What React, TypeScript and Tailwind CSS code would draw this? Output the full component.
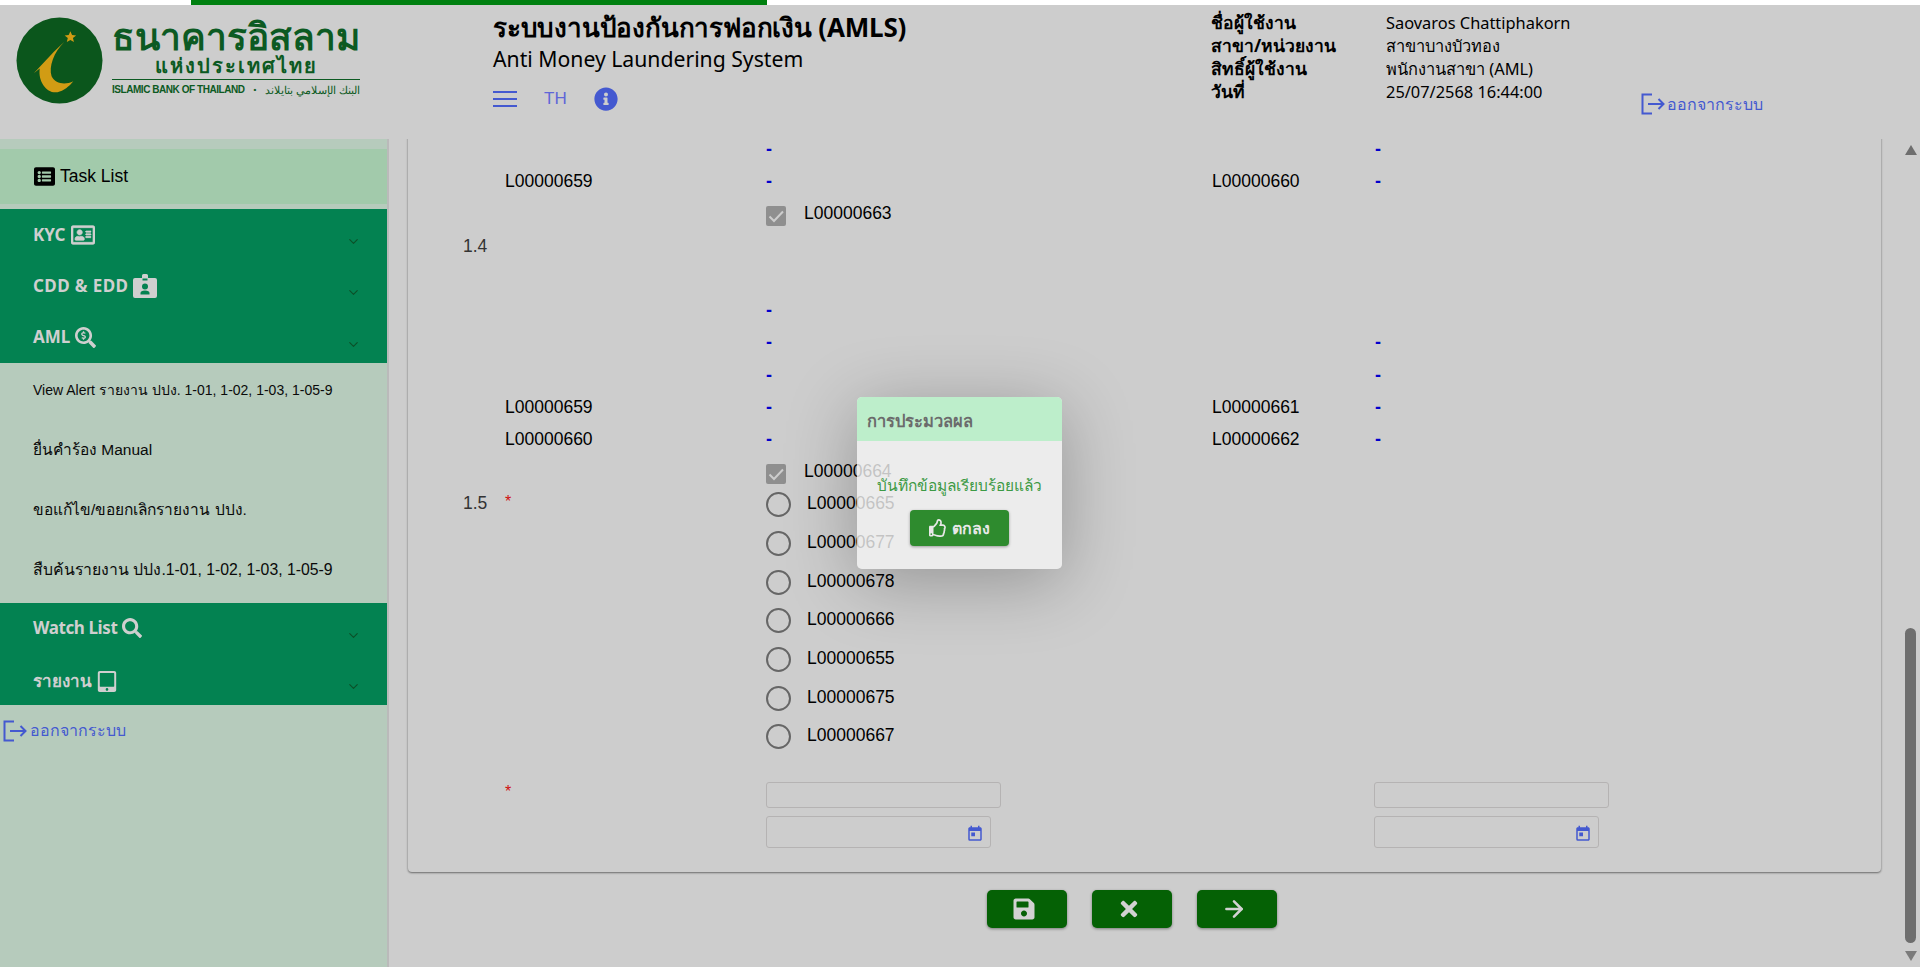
import React from "react";
import {
  FaListAlt, FaRegAddressCard, FaSearchDollar, FaSearch, FaTabletAlt,
  FaSave, FaTimes, FaInfoCircle, FaRegThumbsUp,
} from "react-icons/fa";
import { MdToday } from "react-icons/md";
import { ChevronDown, ArrowRight } from "lucide-react";

const LogoutIcon = ({ className }: { className?: string }) => (
  <svg viewBox="0 0 24 22" className={className} fill="none" stroke="currentColor" strokeWidth="2">
    <path d="M11 1.5H1.5v19H11" />
    <path d="M7 11h15.5M17.5 6l5 5-5 5" />
  </svg>
);

const BadgeIcon = () => (
  <svg viewBox="0 0 24 24" className="w-[24px] h-[24px]" fill="currentColor">
    <path fillRule="evenodd" d="M9 1.5A1.5 1.5 0 0 1 10.5 0h3A1.5 1.5 0 0 1 15 1.5V4h7a2 2 0 0 1 2 2v16a2 2 0 0 1-2 2H2a2 2 0 0 1-2-2V6a2 2 0 0 1 2-2h7zM9.5 4.5v2h5v-2zM12 9.5a3 3 0 1 0 0 6 3 3 0 0 0 0-6zM7.5 19v1.5h9V19c0-1.5-1.5-2.5-4.5-2.5S7.5 17.5 7.5 19z" />
  </svg>
);

const Logo = () => (
  <div className="flex items-start pl-[16px] pt-[12px] w-[493px] shrink-0">
    <svg viewBox="0 0 88 88" className="w-[87px] h-[87px] shrink-0">
      <circle cx="44" cy="44" r="43.5" fill="#0b561c" />
      <path d="M49 25C40 33 28 46 18 57L24 52C22 66 32 78 42 76 48 75 54 70 58 65 50 69 40 68 36 60 33 50 38 36 49 25Z" fill="#d19c14" />
      <path d="M55 14.5l1.7 3.8 4.1.3-3.2 2.7 1 4.1-3.6-2.2-3.6 2.2 1-4.1-3.2-2.7 4.1-.3z" fill="#d19c14" />
    </svg>
    <div className="ml-[9px] -mt-[2px] w-[248px] text-[#0c5a22] font-['Noto_Sans','DejaVu_Sans',sans-serif]">
      <div className="text-[37px] leading-[41px] font-semibold text-center h-[41px] whitespace-nowrap">ธนาคารอิสลาม</div>
      <div className="text-[20px] leading-[20px] font-bold text-center tracking-[2px] border-b border-[#0c5a22] pb-[3px] whitespace-nowrap">แห่งประเทศไทย</div>
      <div className="flex justify-between items-center text-[10px] leading-[20px] font-bold font-['Liberation_Sans',sans-serif] whitespace-nowrap tracking-[-0.45px]">
        <span>ISLAMIC BANK OF THAILAND</span>
        <span className="text-[8px]">•</span>
        <span className="font-normal text-[11px]">البنك الإسلامي بتايلاند</span>
      </div>
    </div>
  </div>
);

const Header = () => (
  <div className="h-[134px] flex bg-[#cdcdcd] text-black font-['Noto_Sans','DejaVu_Sans',sans-serif]">
    <Logo />
    <div className="w-[718px] shrink-0 pt-[4px]">
      <div className="text-[26px] tracking-[-0.2px] leading-[36px] font-bold whitespace-nowrap">ระบบงานป้องกันการฟอกเงิน (AMLS)</div>
      <div className="text-[21.2px] leading-[28px] whitespace-nowrap">Anti Money Laundering System</div>
      <div className="flex items-center h-[24px] mt-[14px] text-[#4459d0]">
        <svg viewBox="0 0 24 16" className="w-[24px] h-[16px]" fill="currentColor">
          <rect y="0" width="24" height="2" /><rect y="7" width="24" height="2" /><rect y="14" width="24" height="2" />
        </svg>
        <span className="ml-[27px] text-[17px] font-['Liberation_Sans',sans-serif] text-[#5f66d8] -mt-[1px]">TH</span>
        <FaInfoCircle className="ml-[27px] w-[24px] h-[24px]" />
      </div>
    </div>
    <div className="w-[429px] shrink-0 pt-[6px] grid grid-cols-[175px_1fr] auto-rows-[23px] text-[16.4px] leading-[23px] content-start whitespace-nowrap">
      <span className="font-bold text-[17.5px]">ชื่อผู้ใช้งาน</span><span>Saovaros Chattiphakorn</span>
      <span className="font-bold text-[17.5px]">สาขา/หน่วยงาน</span><span>สาขาบางบัวทอง</span>
      <span className="font-bold text-[17.5px]">สิทธิ์ผู้ใช้งาน</span><span>พนักงานสาขา (AML)</span>
      <span className="font-bold text-[17.5px]">วันที่</span><span>25/07/2568 16:44:00</span>
    </div>
    <div className="flex items-start pt-[88px] text-[#4459d0]">
      <LogoutIcon className="w-[26px] h-[22px]" />
      <span className="text-[16px] leading-[22px] ml-[1px] whitespace-nowrap">ออกจากระบบ</span>
    </div>
  </div>
);

const GreenItem = ({ label, icon, h, chev, track = "" }: { label: string; icon: React.ReactNode; h: string; chev: string; track?: string }) => (
  <div className={`flex items-start pl-[33px] pr-[26px] ${h}`}>
    <span className="flex items-center gap-[5px] text-[#cfcfcf] text-[17px] font-bold leading-[26px] whitespace-nowrap">
      <span className={track}>{label}</span>
      {icon}
    </span>
    <ChevronDown className={`ml-auto w-[15px] h-[15px] text-[#0c4f28] ${chev}`} strokeWidth={1.8} />
  </div>
);

const SubItem = ({ children, cls }: { children: React.ReactNode; cls: string }) => (
  <div className={`h-[60px] flex items-center pl-[33px] text-[#0a0a0a] whitespace-nowrap font-['Liberation_Sans','Noto_Sans',sans-serif] ${cls}`}>
    {children}
  </div>
);

const Sidebar = () => (
  <div className="w-[389px] shrink-0 bg-[#b6cbbc] border-r-2 border-[#bababa] pt-[10px] font-['Noto_Sans','DejaVu_Sans',sans-serif]">
    <div className="h-[55px] bg-[#a2caab] flex items-center pl-[34px] text-black font-['Liberation_Sans',sans-serif] text-[17.5px]">
      <FaListAlt className="w-[21px] h-[21px] mr-[5px]" />
      Task List
    </div>
    <div className="mt-[5px] bg-[#038251] h-[154px] pt-[13px]">
      <GreenItem h="h-[51px]" chev="mt-[12px]" label="KYC" icon={<FaRegAddressCard className="w-[24px] h-[24px]" strokeWidth={16} />} />
      <GreenItem h="h-[51px]" chev="mt-[12px]" label="CDD & EDD" track="tracking-[0.4px]" icon={<BadgeIcon />} />
      <GreenItem h="h-[39px]" chev="mt-[13px]" label="AML" icon={<FaSearchDollar className="w-[21px] h-[21px]" />} />
    </div>
    <div className="h-[240px] -mt-[3px]">
      <SubItem cls="text-[14px]">View Alert รายงาน ปปง. 1-01, 1-02, 1-03, 1-05-9</SubItem>
      <SubItem cls="text-[15.5px]">ยื่นคำร้อง Manual</SubItem>
      <SubItem cls="text-[15.5px]">ขอแก้ไข/ขอยกเลิกรายงาน ปปง.</SubItem>
      <SubItem cls="text-[15.8px]">สืบค้นรายงาน ปปง.1-01, 1-02, 1-03, 1-05-9</SubItem>
    </div>
    <div className="mt-[3px] bg-[#038251] h-[102px] pt-[12px]">
      <GreenItem h="h-[53px]" chev="mt-[13px]" label="Watch List" track="tracking-[-0.4px]" icon={<FaSearch className="w-[20px] h-[20px]" />} />
      <GreenItem h="h-[37px]" chev="mt-[11px]" label="รายงาน" icon={<FaTabletAlt className="w-[20px] h-[21px]" />} />
    </div>
    <div className="flex items-center pl-[3px] mt-[15px] text-[#4459d0]">
      <LogoutIcon className="w-[24px] h-[22px]" />
      <span className="ml-[3px] text-[16px] leading-[22px] -mt-[2px] whitespace-nowrap">ออกจากระบบ</span>
    </div>
  </div>
);

const Dash = ({ cls = "" }: { cls?: string }) => <span className={`text-[#0000cc] font-bold text-[18px] leading-none relative ${cls}`}>-</span>;

const Row = ({ n, label, c2, c3, c4, h, cls = "" }: {
  n?: React.ReactNode; label?: React.ReactNode; c2?: React.ReactNode; c3?: React.ReactNode; c4?: React.ReactNode; h: string; cls?: string;
}) => (
  <div className={`grid grid-cols-[42px_261px_446px_163px_1fr] items-center ${h} ${cls}`}>
    <div className="text-[#333]">{n}</div>
    <div>{label}</div>
    <div>{c2}</div>
    <div>{c3}</div>
    <div>{c4}</div>
  </div>
);

const Check = ({ label }: { label: string }) => (
  <div className="flex items-center">
    <span className="w-[20px] h-[20px] bg-[#8f8f8f] rounded-[2px] flex items-center justify-center">
      <svg viewBox="0 0 20 20" className="w-[20px] h-[20px]" fill="none" stroke="#cdcdcd" strokeWidth="2"><path d="M3.5 10.5l4.5 4.5 9-9.5" /></svg>
    </span>
    <span className="ml-[18px] -mt-[5px] text-black">{label}</span>
  </div>
);

const Radio = ({ label }: { label: string }) => (
  <div className="flex items-center">
    <span className="w-[25px] h-[25px] rounded-full border-2 border-[#666]" />
    <span className="ml-[16px] -mt-[3px] text-black">{label}</span>
  </div>
);

const Star = () => <span className="text-[#d01010] text-[16px] leading-none relative -top-[4px]">*</span>;

const TextBox = () => <div className="h-[26px] w-[235px] border border-[#b5b3b3] rounded-[3px]" />;
const DateBox = () => (
  <div className="mt-[8px] h-[32px] w-[225px] border border-[#b5b3b3] rounded-[3px] flex items-center justify-end pr-[6px]">
    <MdToday className="w-[18px] h-[18px] text-[#4459d0] mt-[4px]" />
  </div>
);

const radios = ["L00000665", "L00000677", "L00000678", "L00000666", "L00000655", "L00000675", "L00000667"];

const Card = () => (
  <div className="-mt-[6px] pt-[6px] bg-[#cdcdcd] pl-[55px] rounded-b-[4px] shadow-[0_1px_2px_rgba(0,0,0,0.45),0_0_3px_rgba(0,0,0,0.1)] pb-[24px] text-[17.5px] font-['Liberation_Sans',sans-serif]">
    <Row h="h-[18px]" c2={<Dash cls="-top-[3px]" />} c4={<Dash cls="-top-[3px]" />} />
    <Row h="h-[48px]" label="L00000659" c2={<Dash />} c3="L00000660" c4={<Dash />} />
    <Row h="h-[20px]" c2={<Check label="L00000663" />} />
    <Row h="h-[42px]" n="1.4" />
    <Row h="h-[32px]" cls="mt-[27px]" c2={<Dash />} />
    <Row h="h-[33px]" c2={<Dash />} c4={<Dash />} />
    <Row h="h-[32px]" c2={<Dash />} c4={<Dash />} />
    <Row h="h-[32px]" label="L00000659" c2={<Dash />} c3="L00000661" c4={<Dash />} />
    <Row h="h-[32px]" label="L00000660" c2={<Dash />} c3="L00000662" c4={<Dash />} />
    <Row h="h-[20px]" cls="mt-[8px]" c2={<Check label="L00000664" />} />
    <div className="mt-[2.67px]">
      {radios.map((r, i) => (
        <Row key={r} h="h-[38.67px]" n={i === 0 ? <span className="relative -top-[2px]">1.5</span> : undefined} label={i === 0 ? <Star /> : undefined} c2={<Radio label={r} />} />
      ))}
    </div>
    <div className="mt-[25.7px] grid grid-cols-[42px_261px_608px_1fr] items-start">
      <div />
      <div><Star /></div>
      <div><TextBox /><DateBox /></div>
      <div><TextBox /><DateBox /></div>
    </div>
  </div>
);

const ActionButton = ({ children }: { children: React.ReactNode }) => (
  <button className="w-[80px] h-[38px] pr-[6px] rounded-[5px] bg-[#056105] text-[#d2d2d2] flex items-center justify-center shadow-[0_1px_3px_rgba(0,0,0,0.4)]">
    {children}
  </button>
);

const Scrollbar = () => (
  <div className="w-[17px] shrink-0 flex flex-col items-center pr-[2px] pt-[6px] pb-[4px]">
    <span className="w-0 h-0 border-x-[6.5px] border-x-transparent border-b-[10px] border-b-[#6e6e6e]" />
    <div className="mt-[473px] w-[11px] h-[315px] bg-[#6e6e6e] rounded-full" />
    <span className="mt-[8px] w-0 h-0 border-x-[6.5px] border-x-transparent border-t-[10px] border-t-[#7b7b7b]" />
  </div>
);

const Dialog = () => (
  <div className="absolute left-[857px] top-[397px] w-[205px] h-[172px] rounded-[5px] overflow-hidden bg-[rgba(244,244,244,0.8)] shadow-[0_12px_70px_rgba(0,0,0,0.28)] font-['Noto_Sans','DejaVu_Sans',sans-serif]">
    <div className="h-[44px] bg-[#bdeecb] flex items-center pl-[10px] pt-[5px] text-[16.5px] font-bold text-[#6b6b6b] whitespace-nowrap">การประมวลผล</div>
    <div className="flex flex-col items-center pt-[33px]">
      <div className="text-[#3d9a45] text-[15.5px] leading-[22px] whitespace-nowrap">บันทึกข้อมูลเรียบร้อยแล้ว</div>
      <button className="mt-[14px] w-[99px] h-[36px] rounded-[4px] bg-[#2e8b2e] text-[#e8e8e8] flex items-center justify-center gap-[5px] text-[16px] font-bold shadow-[0_1px_3px_rgba(0,0,0,0.35)]">
        <FaRegThumbsUp className="w-[18px] h-[18px]" />
        ตกลง
      </button>
    </div>
  </div>
);

export default function App() {
  return (
    <div className="relative h-screen w-full overflow-hidden bg-[#cdcdcd]">
      <div className="h-[5px] bg-white pl-[191px]">
        <div className="h-full w-[576px] bg-[#008010]" />
      </div>
      <Header />
      <div className="flex h-[828px]">
        <Sidebar />
        <div className="flex-1 flex min-w-0">
          <div className="flex-1 min-w-0 pl-[19px] pr-[22px] overflow-hidden">
            <Card />
            <div className="flex justify-center gap-[25px] mt-[18px] pr-[26px]">
              <ActionButton><FaSave className="w-[24px] h-[24px]" /></ActionButton>
              <ActionButton><FaTimes className="w-[24px] h-[24px]" /></ActionButton>
              <ActionButton><ArrowRight className="w-[26px] h-[26px]" strokeWidth={2.4} /></ActionButton>
            </div>
          </div>
          <Scrollbar />
        </div>
      </div>
      <Dialog />
    </div>
  );
}
